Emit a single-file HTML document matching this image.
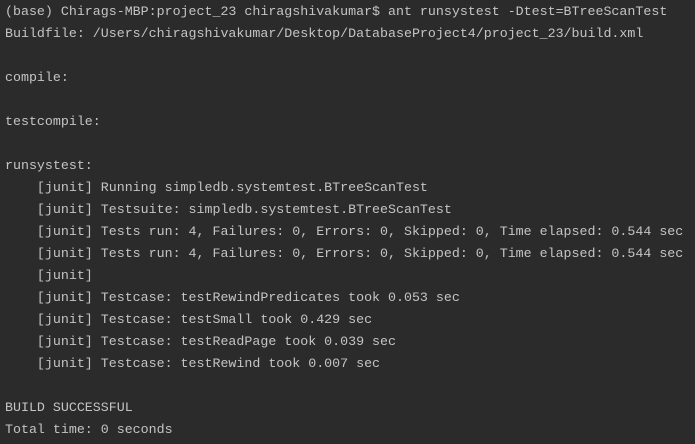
<!DOCTYPE html>
<html><head><style>
html,body{margin:0;padding:0;background:#2b2b2b;width:695px;height:444px;overflow:hidden}
pre{margin:0;position:absolute;left:5px;top:1px;font-family:"Liberation Mono",monospace;font-size:13.3px;line-height:22px;color:#c4c4c4;white-space:pre}
</style></head><body><pre>(base) Chirags-MBP:project_23 chiragshivakumar$ ant runsystest -Dtest=BTreeScanTest
Buildfile: /Users/chiragshivakumar/Desktop/DatabaseProject4/project_23/build.xml

compile:

testcompile:

runsystest:
    [junit] Running simpledb.systemtest.BTreeScanTest
    [junit] Testsuite: simpledb.systemtest.BTreeScanTest
    [junit] Tests run: 4, Failures: 0, Errors: 0, Skipped: 0, Time elapsed: 0.544 sec
    [junit] Tests run: 4, Failures: 0, Errors: 0, Skipped: 0, Time elapsed: 0.544 sec
    [junit]
    [junit] Testcase: testRewindPredicates took 0.053 sec
    [junit] Testcase: testSmall took 0.429 sec
    [junit] Testcase: testReadPage took 0.039 sec
    [junit] Testcase: testRewind took 0.007 sec

BUILD SUCCESSFUL
Total time: 0 seconds</pre></body></html>
